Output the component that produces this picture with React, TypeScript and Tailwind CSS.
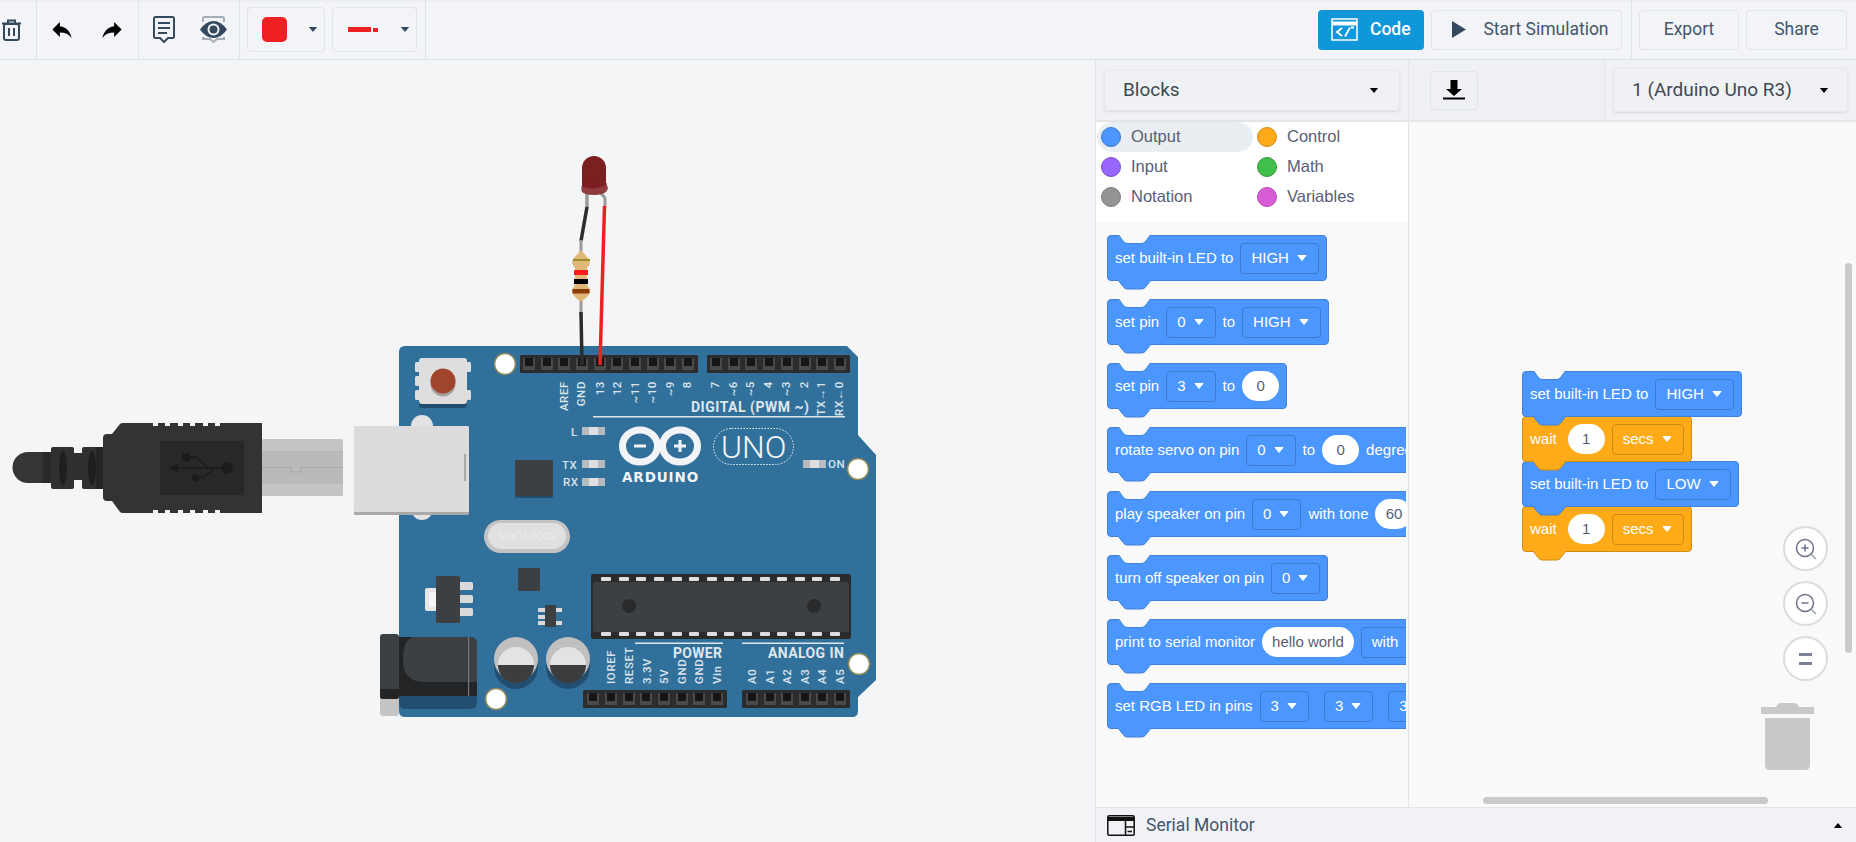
import type { ReactNode } from "react";

const topPinsLeft = [529, 547, 564, 582, 600, 617, 635, 653, 670, 688];
const topPinsRight = [716, 734, 751, 769, 787, 805, 822, 840];
const powerPins = [593, 611, 629, 646, 664, 682, 699, 717];
const analogPins = [752, 770, 787, 805, 822, 840];
const icPins = [606, 624, 641, 659, 677, 694, 712, 729, 747, 765, 782, 800, 817, 835];

const digitalLabels = [
  { x: 568, t: "AREF" },
  { x: 585, t: "GND" },
  { x: 604, t: "13" },
  { x: 621, t: "12" },
  { x: 639, t: "~11" },
  { x: 656, t: "~10" },
  { x: 674, t: "~9" },
  { x: 691, t: "8" },
  { x: 719, t: "7" },
  { x: 737, t: "~6" },
  { x: 754, t: "~5" },
  { x: 772, t: "4" },
  { x: 790, t: "~3" },
  { x: 808, t: "2" },
  { x: 825, t: "TX→1" },
  { x: 843, t: "RX←0" },
];

const powerLabels = [
  { x: 615, t: "IOREF" },
  { x: 633, t: "RESET" },
  { x: 651, t: "3.3V" },
  { x: 668, t: "5V" },
  { x: 686, t: "GND" },
  { x: 703, t: "GND" },
  { x: 721, t: "Vin" },
  { x: 756, t: "A0" },
  { x: 774, t: "A1" },
  { x: 791, t: "A2" },
  { x: 809, t: "A3" },
  { x: 826, t: "A4" },
  { x: 844, t: "A5" },
];

function PinHeader({ x, y, w, pins }: { x: number; y: number; w: number; pins: number[] }) {
  return (
    <g>
      <rect x={x} y={y} width={w} height={18} rx={1.5} fill="#2b2c2d" />
      {pins.map((p) => (
        <g key={p}>
          <rect x={p - 6} y={y + 3} width={12} height={12} fill="#4a4a4a" />
          <rect x={p - 4} y={y + 3} width={8} height={8} fill="#161616" />
        </g>
      ))}
    </g>
  );
}

function SmdLed({ x, y }: { x: number; y: number }) {
  return (
    <g>
      <rect x={x} y={y} width={23} height={8} fill="#b4bcc2" />
      <rect x={x + 7} y={y} width={9} height={8} fill="#e0e0e0" />
    </g>
  );
}

function Hole({ x, y }: { x: number; y: number }) {
  return <circle cx={x} cy={y} r={10.5} fill="#fff" stroke="#8d8a5c" strokeWidth={1.5} />;
}

function Circuit() {
  return (
    <svg viewBox="0 60 1095 782" className="h-full w-full">
      {/* usb plug */}
      <rect x="262" y="439" width="81" height="57" rx="1.5" fill="#c5c5c5" />
      <rect x="262" y="451" width="81" height="33" fill="#bababa" />
      <path d="M262 467.5H291V472H301V467.5H343" fill="none" stroke="#a9a9a9" strokeWidth="1" />
      <path d="M50 452H28a15.5 15.5 0 0 0 0 31H50Z" fill="#353535" />
      <rect x="43" y="452" width="10" height="31" fill="#292929" />
      <rect x="51" y="447" width="23" height="42" rx="2" fill="#303030" />
      <rect x="74" y="453" width="8" height="27" fill="#303030" />
      <rect x="82" y="447" width="22" height="42" rx="2" fill="#303030" />
      <ellipse cx="63" cy="468" rx="4" ry="17" fill="#1f1f1f" />
      <ellipse cx="92" cy="468" rx="4" ry="17" fill="#1f1f1f" />
      <path d="M96 447H103V489H96Z" fill="#262626" />
      <path d="M107 434H112L120 424Q121 423 123 423H262V513H123Q121 513 120 512L112 501H107Q103 501 103 497V438Q103 434 107 434Z" fill="#333" />
      {[153, 165, 178, 190, 203, 215].map((x) => (
        <g key={x}>
          <rect x={x} y="423" width="5" height="3" fill="#f4f5f7" />
          <rect x={x} y="510" width="5" height="3" fill="#f4f5f7" />
        </g>
      ))}
      <rect x="160" y="441" width="84" height="54" fill="#282828" />
      <g fill="#1b1b1b" stroke="#1b1b1b">
        <path d="M176 468H226" strokeWidth="1.6" fill="none" />
        <path d="M170 468L178 464V472Z" strokeWidth="0.5" />
        <path d="M190 457H196L208 468" strokeWidth="1.6" fill="none" />
        <path d="M196 478H203L214 468" strokeWidth="1.6" fill="none" />
        <rect x="182.5" y="454" width="7" height="7" strokeWidth="0.5" />
        <circle cx="195.500" cy="478" r="3.200" strokeWidth="0.5" />
        <circle cx="227" cy="468" r="5.500" strokeWidth="0.5" />
      </g>

      {/* board */}
      <path d="M405 346H847L858 357V435L876 455V680L858 697V711Q858 717 852 717H405Q399 717 399 711V352Q399 346 405 346Z" fill="#32709c" />
      <rect x="399" y="680" width="78" height="29" rx="6" fill="#234e70" />

      {/* jack */}
      <rect x="380" y="690" width="19" height="26" rx="3" fill="#c4c4c4" />
      <path d="M399 637H470Q477 637 477 644V696H399Z" fill="#232425" />
      <path d="M415 637H470Q477 637 477 644V682H425Q403 682 403 660Q403 637 415 637Z" fill="#3d4043" />
      <rect x="468" y="637" width="1.2" height="59" fill="#77797b" />
      <rect x="380" y="634" width="19" height="65" rx="3" fill="#3d4043" />
      <path d="M380 689H399V696Q399 699 396 699H383Q380 699 380 696Z" fill="#232425" />

      {/* reset */}
      <g fill="#dcdde0">
        <rect x="415" y="362" width="5" height="10" rx="1.5" />
        <rect x="415" y="376" width="5" height="10" rx="1.5" />
        <rect x="415" y="390" width="5" height="10" rx="1.5" />
        <rect x="466" y="362" width="5" height="10" rx="1.5" />
        <rect x="466" y="390" width="5" height="10" rx="1.5" />
      </g>
      <rect x="419" y="362" width="48" height="46" rx="3" fill="#234e70" />
      <rect x="419" y="358" width="48" height="46" rx="3" fill="#dededf" />
      <circle cx="443" cy="384" r="12.500" fill="#a3a09e" />
      <circle cx="443" cy="381" r="12.500" fill="#a0452b" />

      {/* usb port */}
      <ellipse cx="422" cy="426" rx="11" ry="11" fill="#e2e2e2" />
      <ellipse cx="422" cy="509" rx="11" ry="11" fill="#e2e2e2" />
      <rect x="354" y="426" width="115" height="89" rx="1.5" fill="#a9a9a9" />
      <rect x="354" y="426" width="115" height="86" rx="1.5" fill="#dcdcdc" />
      <rect x="464" y="454" width="2" height="27" fill="#a9a9a9" />

      {/* regulator */}
      <rect x="425" y="588" width="14" height="23" rx="2" fill="#e6e6e6" />
      <rect x="429" y="592" width="8" height="15" fill="#f5f5f5" />
      <g fill="#d9d9d9">
        <rect x="458" y="582" width="15" height="8" rx="1.5" />
        <rect x="458" y="595" width="15" height="8" rx="1.5" />
        <rect x="458" y="608" width="15" height="8" rx="1.5" />
      </g>
      <rect x="436" y="576" width="24" height="47" rx="1.5" fill="#3d4043" />

      <PinHeader x={520} y={355} w={178} pins={topPinsLeft} />
      <PinHeader x={707} y={355} w={143} pins={topPinsRight} />
      <PinHeader x={583} y={690} w={144} pins={powerPins} />
      <PinHeader x={742} y={690} w={108} pins={analogPins} />

      <Hole x={505} y={364} />
      <Hole x={858} y={469} />
      <Hole x={859} y={664} />
      <Hole x={496} y={699} />

      {/* silk labels */}
      <g fill="#dbe4ea" fontFamily="Roboto, sans-serif" fontSize="11.5" fontWeight="500" letterSpacing="0.6">
        {digitalLabels.map((l) => (
          <text key={l.t} transform={`translate(${l.x} 381) rotate(-90)`} textAnchor="end">
            {l.t}
          </text>
        ))}
        {powerLabels.map((l) => (
          <text key={l.t + l.x} transform={`translate(${l.x} 684) rotate(-90)`}>
            {l.t}
          </text>
        ))}
        <text x="571" y="436">L</text>
        <text x="562" y="469">TX</text>
        <text x="563" y="486">RX</text>
        <text x="828" y="468">ON</text>
      </g>
      <g fill="#dfe7ec" fontFamily="Roboto, sans-serif" fontWeight="700">
        <text x="691" y="412" fontSize="14" letterSpacing="0.5">DIGITAL (PWM ~)</text>
        <text x="673" y="658" fontSize="14" letterSpacing="0.3">POWER</text>
        <text x="768" y="658" fontSize="14" letterSpacing="0.4">ANALOG IN</text>
      </g>
      <g fill="#dfe7ec">
        <rect x="593" y="416" width="252" height="1.5" />
        <rect x="635" y="642.500" width="88" height="1.5" />
        <rect x="742" y="642.500" width="102" height="1.500" />
      </g>

      <SmdLed x={582} y={427} />
      <SmdLed x={582} y={460} />
      <SmdLed x={582} y={478} />
      <SmdLed x={803} y={460} />

      {/* logo */}
      <g fill="none" stroke="#f2f5f7" strokeWidth="7">
        <ellipse cx="640" cy="446" rx="17.500" ry="16" />
        <ellipse cx="680" cy="446" rx="17.500" ry="16" />
      </g>
      <g fill="#f2f5f7">
        <rect x="634" y="444.500" width="12" height="3" />
        <rect x="674" y="444.500" width="12" height="3" />
        <rect x="678.500" y="440" width="3" height="12" />
      </g>
      <text x="622" y="482" fill="#f2f5f7" fontFamily="'DejaVu Sans', sans-serif" fontSize="13.500" fontWeight="700" letterSpacing="0.9">ARDUINO</text>
      <rect x="713.500" y="428.500" width="80" height="36" rx="18" fill="none" stroke="#f2f5f7" strokeWidth="1" strokeDasharray="1.5 1.5" />
      <text x="721" y="458" fill="#f2f5f7" fontFamily="Roboto, sans-serif" fontSize="32" fontWeight="300">UNO</text>

      {/* chips */}
      <rect x="515" y="461" width="38" height="37" rx="1.5" fill="#234e70" />
      <rect x="515" y="460" width="38" height="36" rx="1.5" fill="#3d4043" />
      <rect x="484" y="520" width="86" height="33" rx="16.500" fill="#c3c3c3" />
      <rect x="488" y="523" width="78" height="26" rx="13" fill="#e0e0e0" />
      <text x="527" y="540" textAnchor="middle" fill="#f0f0f0" fontFamily="Roboto, sans-serif" fontSize="10.500" fontWeight="300">SPK16.000G</text>
      <rect x="518" y="568" width="22" height="23" rx="1" fill="#3d4043" />

      <g fill="#d9d9d9">
        <rect x="538" y="608" width="7" height="4" />
        <rect x="538" y="615" width="7" height="4" />
        <rect x="538" y="621" width="7" height="4" />
        <rect x="556" y="608" width="6" height="4" />
        <rect x="556" y="621" width="6" height="4" />
      </g>
      <rect x="545" y="605" width="11" height="22" fill="#3d4043" />

      <rect x="591" y="574" width="260" height="65" rx="2" fill="#2a2b2c" />
      <rect x="593" y="582" width="256" height="50" rx="2" fill="#3d4043" />
      {icPins.map((x) => (
        <g key={x} fill="#dedede">
          <rect x={x - 5} y="577" width="10" height="4" rx="1" />
          <rect x={x - 5} y="632" width="10" height="4" rx="1" />
        </g>
      ))}
      <circle cx="629" cy="606" r="7" fill="#282a2b" />
      <circle cx="814" cy="606" r="7" fill="#282a2b" />

      {/* caps */}
      {[516, 568].map((x) => (
        <g key={x}>
          <circle cx={x} cy={667} r={22} fill="#234e70" />
          <circle cx={x} cy={659} r={22} fill="#c0c0c0" />
          <path d={`M${x - 18} 665H${x + 18}A18 18 0 0 1 ${x - 18} 665Z`} fill="#3d3d3d" />
          <path d={`M${x - 18} 665A18 18 0 1 1 ${x + 18} 665Z`} fill="#e3e3e3" />
        </g>
      ))}

      {/* led and wires */}
      <path d="M587 190V208" stroke="#9a9a9a" strokeWidth="3.500" fill="none" />
      <path d="M600 192L605 198V207" stroke="#9a9a9a" strokeWidth="3" fill="none" />
      <path d="M587 207L581 241" stroke="#2c2c2c" strokeWidth="3.500" fill="none" />
      <path d="M581 240V252" stroke="#9a9a9a" strokeWidth="3" fill="none" />
      <path d="M581 300V314" stroke="#9a9a9a" strokeWidth="3" fill="none" />
      <path d="M581 312L582 365" stroke="#2c2c2c" strokeWidth="3.500" fill="none" />
      <path d="M604.500 206L600 365" stroke="#ee2024" strokeWidth="3.500" fill="none" />
      <path d="M581 250L587 257Q590 259 590 262T587 268V285Q590 288 590 291T587 297L581 302L575 297Q572 294 572 291T575 285V268Q572 265 572 262T575 257Z" fill="#dfb877" />
      <rect x="573" y="259" width="17" height="2" fill="#a08a2a" />
      <rect x="574" y="270" width="14" height="5" fill="#fb1b1b" />
      <rect x="574" y="279" width="14" height="5" fill="#000" />
      <rect x="572.500" y="289" width="17" height="4.500" fill="#8b3d0d" />
      <path d="M582 190V168A12 12 0 0 1 606 168V188Z" fill="#7c1f20" />
      <path d="M581.500 186L606 183L608 188Q607 195 595 195Q583 195 581.500 191Z" fill="#8f3a3c" />
      <path d="M582 186Q594 192 607 184L606 183L582 184Z" fill="#7c1f20" />
    </svg>
  );
}

function ToolDivider() {
  return <div className="h-full w-px bg-[#dfe2e6]" />;
}

function Caret({ className }: { className: string }) {
  return (
    <svg viewBox="0 0 10 6" className={className}>
      <path d="M0 0H10L5 6Z" fill="currentColor" />
    </svg>
  );
}

function GhostButton({ children, className }: { children: ReactNode; className: string }) {
  return (
    <div className={`flex h-[40px] items-center justify-center rounded border border-[#e1e4e8] text-[17.5px] text-[#44566c] ${className}`}>
      {children}
    </div>
  );
}

function Toolbar() {
  return (
    <div className="flex h-[60px] shrink-0 border-b border-[#dfe2e6] bg-[#f3f4f7] shadow-[inset_0_3px_3px_-2px_rgba(0,0,0,0.05)]">
      <div className="flex h-full w-[36px] shrink-0 items-center pl-[2px]">
        <svg viewBox="0 0 19 22" className="h-[22px] w-[19px]" fill="none" stroke="#34495e" strokeWidth="2">
          <path d="M0 4.500H19" />
          <path d="M6 4V1.500H13V4" />
          <rect x="2" y="5" width="15" height="16" rx="2" />
          <path d="M7 9V17M12 9V17" />
        </svg>
      </div>
      <ToolDivider />
      <div className="flex h-full w-[101px] items-center gap-[30px] pl-[15px]">
        <svg viewBox="3 5 18 15" className="h-[16px] w-[20px]" fill="#000">
          <path d="M10 9V5l-7 7 7 7v-4.100c5 0 8.500 1.600 11 5.100-1-5-4-10-11-11z" />
        </svg>
        <svg viewBox="3 5 18 15" className="h-[16px] w-[20px]" fill="#000">
          <path d="M14 9V5l7 7-7 7v-4.100c-5 0-8.500 1.600-11 5.100 1-5 4-10 11-11z" />
        </svg>
      </div>
      <ToolDivider />
      <div className="flex h-full w-[100px] items-center gap-[25px] pl-[14px]">
        <svg viewBox="0 0 22 27" className="h-[27px] w-[22px]" fill="none" stroke="#34495e" strokeWidth="2">
          <path d="M2.500 1H19.500Q21 1 21 2.500V21Q21 22 19.500 22H15L11 26L7 22H2.500Q1 22 1 21V2.500Q1 1 2.500 1Z" />
          <path d="M5 7H17M5 12H17M5 17H14" />
        </svg>
        <svg viewBox="0 0 27 27" className="h-[27px] w-[27px]">
          <path d="M3 6V2.500Q3 1 4.500 1H22.500Q24 1 24 2.500V6M3 21V23H10L13.500 26L17 23H24V21" fill="none" stroke="#a3aeb9" strokeWidth="2" />
          <path d="M0 13.500Q6 5 13.500 5T27 13.500Q21 22 13.500 22T0 13.500Z" fill="#34495e" />
          <circle cx="13.500" cy="13.500" r="6" fill="#f3f4f7" />
          <circle cx="13.500" cy="13.500" r="4" fill="#34495e" />
        </svg>
      </div>
      <ToolDivider />
      <div className="flex h-full w-[185px] items-center gap-[7px] pl-[7px]">
        <div className="flex h-[45px] w-[78px] items-center rounded border border-[#e1e4e8] pl-[14px]">
          <div className="h-[25px] w-[25px] rounded-[5px] bg-[#ee2024]" />
          <Caret className="ml-[21px] h-[5px] w-[10px] text-[#34495e]" />
        </div>
        <div className="flex h-[45px] w-[85px] items-center rounded border border-[#e1e4e8] pl-[15px]">
          <div className="h-[5px] w-[23px] bg-[#ee2024]" />
          <div className="ml-[2px] h-[4px] w-[5px] bg-[#ee2024]" />
          <Caret className="ml-[22px] h-[5px] w-[10px] text-[#34495e]" />
        </div>
      </div>
      <ToolDivider />
      <div className="flex-1" />
      <div className="flex h-full items-center gap-[7px] pr-[9px]">
        <div className="flex h-[40px] w-[106px] items-center rounded bg-[#0f97d9] pl-[13px] text-[17.5px] font-medium text-white">
          <svg viewBox="0 0 27 23" className="mr-[12px] h-[23px] w-[27px]" fill="none" stroke="#fff" strokeWidth="1.500">
            <rect x="1" y="1" width="25" height="21" />
            <path d="M1 5.500H26" strokeWidth="4" />
            <path d="M11 10L6 14L11 18M14 18.500L19 9.500M20 9.500H23" strokeWidth="1.800" />
          </svg>
          Code
        </div>
        <GhostButton className="w-[191px] gap-[17px] pl-[8px]">
          <svg viewBox="0 0 14 17" className="h-[17px] w-[14px]">
            <path d="M0 0L14 8.500L0 17Z" fill="#34495e" />
          </svg>
          Start Simulation
        </GhostButton>
      </div>
      <ToolDivider />
      <div className="flex h-full items-center gap-[7px] pl-[7px] pr-[9px]">
        <GhostButton className="w-[100px]">Export</GhostButton>
        <GhostButton className="w-[101px]">Share</GhostButton>
      </div>
    </div>
  );
}

type Tone = "blue" | "orange";

const toneBox: Record<Tone, string> = {
  blue: "border-[#4280d7] bg-[#4c97ff]",
  orange: "border-[#cf8b17] bg-[#ffab19]",
};
const toneTab: Record<Tone, string> = {
  blue: "fill-[#4c97ff] stroke-[#4280d7]",
  orange: "fill-[#ffab19] stroke-[#cf8b17]",
};
const toneLine: Record<Tone, string> = {
  blue: "stroke-[#4280d7]",
  orange: "stroke-[#cf8b17]",
};
const toneField: Record<Tone, string> = {
  blue: "border-[#3d79cc]",
  orange: "border-[#cf8b17]",
};

function Block({ tone = "blue", className = "", children }: { tone?: Tone; className?: string; children: ReactNode }) {
  return (
    <div className={`relative flex h-[46px] w-max shrink-0 items-center gap-[7px] rounded-[4px] border px-[7px] text-[15px] text-white ${toneBox[tone]} ${className}`}>
      <svg viewBox="0 0 34 10" className="absolute -top-px left-[10px] h-[10px] w-[34px]">
        <path d="M0 -1L5 6Q7 8.500 9 8.500H24Q26 8.500 28 6L33 -1Z" fill="#f9f9f9" />
        <path d="M0 -1L5 6Q7 8.500 9 8.500H24Q26 8.500 28 6L33 -1" fill="none" className={toneLine[tone]} />
      </svg>
      <svg viewBox="0 0 34 10" className="absolute -bottom-[10px] left-[10px] z-10 h-[10px] w-[34px]">
        <path d="M0 0L5 6.500Q7 9 9 9H24Q26 9 28 6.500L33 0" className={toneTab[tone]} />
      </svg>
      {children}
    </div>
  );
}

function Field({ tone = "blue", children }: { tone?: Tone; children: ReactNode }) {
  return (
    <div className={`flex h-[31px] items-center gap-[8px] rounded-[4px] border pl-[10px] pr-[11px] ${toneField[tone]}`}>
      {children}
      <svg viewBox="0 0 10 6" className="h-[6px] w-[10px]">
        <path d="M1 0.500H9L5 5.500Z" fill="#fff" stroke="#fff" strokeLinejoin="round" />
      </svg>
    </div>
  );
}

function Pill({ children }: { children: ReactNode }) {
  return (
    <div className="flex h-[30px] min-w-[37px] items-center justify-center rounded-full bg-white px-[10px] text-[#575e75]">
      {children}
    </div>
  );
}

const categories = [
  { label: "Output", dot: "bg-[#4c97ff] border-[#3373cc]", active: true },
  { label: "Control", dot: "bg-[#ffab19] border-[#cf8b17]", active: false },
  { label: "Input", dot: "bg-[#9966ff] border-[#774dcb]", active: false },
  { label: "Math", dot: "bg-[#40bf4a] border-[#389438]", active: false },
  { label: "Notation", dot: "bg-[#949494] border-[#7a7a7a]", active: false },
  { label: "Variables", dot: "bg-[#d65cd6] border-[#bd42bd]", active: false },
];

function Palette() {
  return (
    <div className="grid h-[100px] shrink-0 grid-cols-[156px_156px] content-start bg-white pl-px">
      {categories.map((c) => (
        <div
          key={c.label}
          className={`flex h-[30px] items-center gap-[10px] rounded-l-full rounded-r-full pl-[4px] text-[16.5px] text-[#575e75] ${c.active ? "bg-[#e9eef2]" : ""}`}
        >
          <span className={`h-[20px] w-[20px] rounded-full border ${c.dot}`} />
          <span className="pb-[2px]">{c.label}</span>
        </div>
      ))}
    </div>
  );
}

function Flyout() {
  return (
    <div className="flex w-[310px] flex-1 flex-col items-start gap-[18px] overflow-hidden pl-[11px] pt-[13px]">
      <Block>
        set built-in LED to <Field>HIGH</Field>
      </Block>
      <Block>
        set pin <Field>0</Field> to <Field>HIGH</Field>
      </Block>
      <Block>
        set pin <Field>3</Field> to <Pill>0</Pill>
      </Block>
      <Block>
        rotate servo on pin <Field>0</Field> to <Pill>0</Pill> degrees
      </Block>
      <Block>
        play speaker on pin <Field>0</Field> with tone <Pill>60</Pill>
      </Block>
      <Block>
        turn off speaker on pin <Field>0</Field>
      </Block>
      <Block>
        print to serial monitor <Pill>hello world</Pill> <Field>with</Field>
      </Block>
      <Block>
        set RGB LED in pins <Field>3</Field> <span className="w-px" /> <Field>3</Field> <span className="w-px" /> <Field>3</Field>
      </Block>
    </div>
  );
}

function ZoomButton({ children }: { children: ReactNode }) {
  return (
    <div className="flex h-[45px] w-[45px] items-center justify-center rounded-full border-2 border-[#dcdcdc] bg-white">
      {children}
    </div>
  );
}

function Workspace() {
  return (
    <div className="relative flex-1 overflow-hidden bg-[#f9f9f9] pl-[113px] pt-[249px]">
      <Block className="z-40">
        set built-in LED to <Field>HIGH</Field>
      </Block>
      <Block tone="orange" className="z-30 -mt-px">
        <span className="mr-[4px]">wait</span> <Pill>1</Pill> <Field tone="orange">secs</Field>
      </Block>
      <Block className="z-20 -mt-px">
        set built-in LED to <Field>LOW</Field>
      </Block>
      <Block tone="orange" className="z-10 -mt-px">
        <span className="mr-[4px]">wait</span> <Pill>1</Pill> <Field tone="orange">secs</Field>
      </Block>

      <div className="absolute right-[28px] top-[404px] flex flex-col gap-[10px]">
        <ZoomButton>
          <svg viewBox="0 0 22 22" className="h-[22px] w-[22px]" fill="none" stroke="#6b7288" strokeWidth="1.500">
            <circle cx="10" cy="10" r="8.500" />
            <path d="M16.500 16.500L21 21" stroke="#9aa0ae" />
            <path d="M6.500 10H13.500M10 6.500V13.500" />
          </svg>
        </ZoomButton>
        <ZoomButton>
          <svg viewBox="0 0 22 22" className="h-[22px] w-[22px]" fill="none" stroke="#6b7288" strokeWidth="1.500">
            <circle cx="10" cy="10" r="8.500" />
            <path d="M16.500 16.500L21 21" stroke="#9aa0ae" />
            <path d="M6.500 10H13.500" />
          </svg>
        </ZoomButton>
        <ZoomButton>
          <div className="flex flex-col gap-[6px]">
            <div className="h-[3px] w-[13px] bg-[#7a8196]" />
            <div className="h-[3px] w-[13px] bg-[#7a8196]" />
          </div>
        </ZoomButton>
      </div>

      <svg viewBox="0 0 53 67" className="absolute right-[42px] top-[581px] h-[67px] w-[53px]" fill="#c9c9c9">
        <path d="M0 4H15Q17 0 20 0H33Q36 0 38 4H53V11H0Z" />
        <path d="M4 15H49V62Q49 67 44 67H9Q4 67 4 62Z" />
      </svg>

      <div className="absolute right-[4px] top-[141px] h-[390px] w-[7px] rounded-full bg-[#cacaca]" />
      <div className="absolute bottom-[3px] left-[74px] h-[7px] w-[285px] rounded-full bg-[#cacaca]" />
    </div>
  );
}

function CodePanel() {
  return (
    <div className="flex w-[761px] shrink-0 flex-col border-l border-[#e4e6ea]">
      <div className="flex h-[62px] shrink-0 border-b-2 border-[#e3e5e9] bg-[#f0f1f4]">
        <div className="flex w-[313px] items-center border-r border-[#e3e5e9] pl-[8px]">
          <div className="flex h-[41px] w-[296px] items-center justify-between rounded border border-[#e6e8eb] pl-[18px] pr-[20px] text-[19px] text-[#3f4a4a] shadow-[0_1px_2px_rgba(0,0,0,0.1)]">
            Blocks
            <Caret className="h-[5px] w-[10px] text-black" />
          </div>
        </div>
        <div className="flex w-[196px] items-center border-r border-[#e3e5e9] pl-[21px]">
          <div className="flex h-[39px] w-[48px] items-center justify-center rounded border border-[#e1e4e8]">
            <svg viewBox="0 0 22 20" className="h-[20px] w-[22px]">
              <path d="M7.500 0H14.500V9H19L11 16L3 9H7.500Z" fill="#000" />
              <rect x="0" y="17.500" width="22" height="2" fill="#000" />
            </svg>
          </div>
        </div>
        <div className="flex flex-1 items-center pl-[8px]">
          <div className="flex h-[44px] w-[235px] items-center justify-between rounded border border-[#e6e8eb] pl-[18px] pr-[18px] text-[19px] text-[#3f4a55] shadow-[0_1px_2px_rgba(0,0,0,0.1)]">
            1 (Arduino Uno R3)
            <Caret className="h-[5px] w-[10px] text-black" />
          </div>
        </div>
      </div>
      <div className="flex min-h-0 flex-1 font-['Liberation_Sans',sans-serif]">
        <div className="flex w-[313px] shrink-0 flex-col border-r border-[#dfe2e6] bg-[#f9f9f9]">
          <Palette />
          <Flyout />
        </div>
        <Workspace />
      </div>
      <div className="flex h-[35px] shrink-0 items-center border-t border-[#e3e5e9] bg-[#f1f2f5] pl-[11px] pr-[13px] text-[17.5px] text-[#44566c]">
        <svg viewBox="0 0 28 21" className="mr-[11px] h-[21px] w-[28px]" fill="none" stroke="#111" strokeWidth="1.500">
          <rect x="0.800" y="0.800" width="26.400" height="19.400" rx="1.500" />
          <path d="M0.800 4H27.200" strokeWidth="4" />
          <path d="M18.500 5V20M18.500 12H27M20.500 16.500H25" />
        </svg>
        Serial Monitor
        <Caret className="ml-auto h-[5px] w-[10px] rotate-180 text-black" />
      </div>
    </div>
  );
}

export default function App() {
  return (
    <div className="flex h-[842px] w-[1856px] flex-col overflow-hidden bg-[#f4f5f7] font-['Roboto',sans-serif]">
      <Toolbar />
      <div className="flex min-h-0 flex-1">
        <div className="min-w-0 flex-1">
          <Circuit />
        </div>
        <CodePanel />
      </div>
    </div>
  );
}
